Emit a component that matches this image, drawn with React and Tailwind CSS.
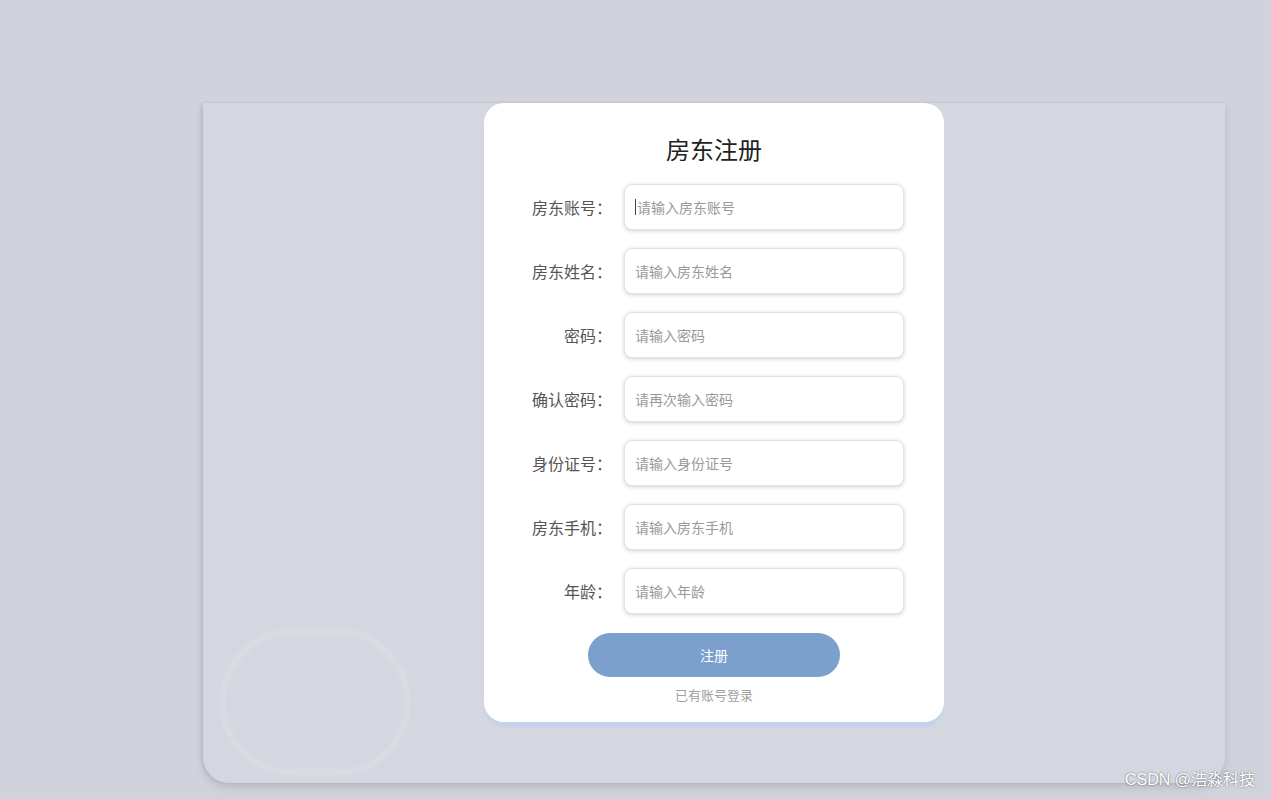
import React from "react";

const fields = [
  ["房东账号：", "请输入房东账号"],
  ["房东姓名：", "请输入房东姓名"],
  ["密码：", "请输入密码"],
  ["确认密码：", "请再次输入密码"],
  ["身份证号：", "请输入身份证号"],
  ["房东手机：", "请输入房东手机"],
  ["年龄：", "请输入年龄"],
];

export default function App() {
  return (
    <div
      className="w-[1271px] h-[799px] bg-[#d0d3dc] overflow-hidden relative"
      style={{ fontFamily: '"Noto Sans CJK SC", "Noto Sans", sans-serif' }}
    >
      <div className="pt-[103px] pl-[203px]">
        <div className="relative w-[1022px] h-[680px] bg-[#d4d7df] rounded-b-[26px] shadow-[0_4px_8px_rgba(0,0,0,0.12),-2px_0_3px_rgba(0,0,0,0.06)]">
          <div className="absolute left-[16px] top-[525px] w-[192px] h-[148px] rounded-full border-[7px] border-[#d8dbe2] blur-[1px]" />
          <div className="absolute left-[281px] top-0 w-[460px]">
            <div className="relative w-[460px] h-[619px] bg-white rounded-[20px] shadow-[0_6px_2px_-1px_#c3d3ea] flex flex-col items-center">
              <div className="mt-[29px] h-[34px] text-[24px] leading-[34px] text-[#222]">房东注册</div>
              <div className="mt-[18px] flex flex-col gap-[18px] pl-[21px] w-full">
                {fields.map(([label, ph], i) => (
                  <div key={i} className="flex items-center h-[46px]">
                    <div className="w-[107px] text-right text-[16px] text-[#555]">{label}</div>
                    <div className="ml-[12px] w-[280px] h-[46px] rounded-[8px] border border-[#e2e2e2] bg-white shadow-[0_1px_4px_rgba(0,0,0,0.18)] flex items-center pl-[10px] text-[14px] text-[#999]">
                      {i === 0 && <span className="w-px h-[16px] bg-[#444] mr-[1px]" />}
                      {ph}
                    </div>
                  </div>
                ))}
              </div>
              <div className="mt-[19px] w-[252px] h-[44px] rounded-full bg-[#7ba0cd] flex items-center justify-center text-white text-[14px]">
                注册
              </div>
              <div className="mt-[8px] text-[13px] text-[#a0a0a0]">已有账号登录</div>
            </div>
          </div>
        </div>
      </div>
      <div
        className="absolute right-[16px] bottom-[7px] text-[16px] text-white [text-shadow:0_0_2px_rgba(0,0,0,0.6)]"
        style={{ fontFamily: '"Liberation Sans", "Noto Sans CJK SC", sans-serif' }}
      >
        CSDN @浩淼科技
      </div>
    </div>
  );
}
